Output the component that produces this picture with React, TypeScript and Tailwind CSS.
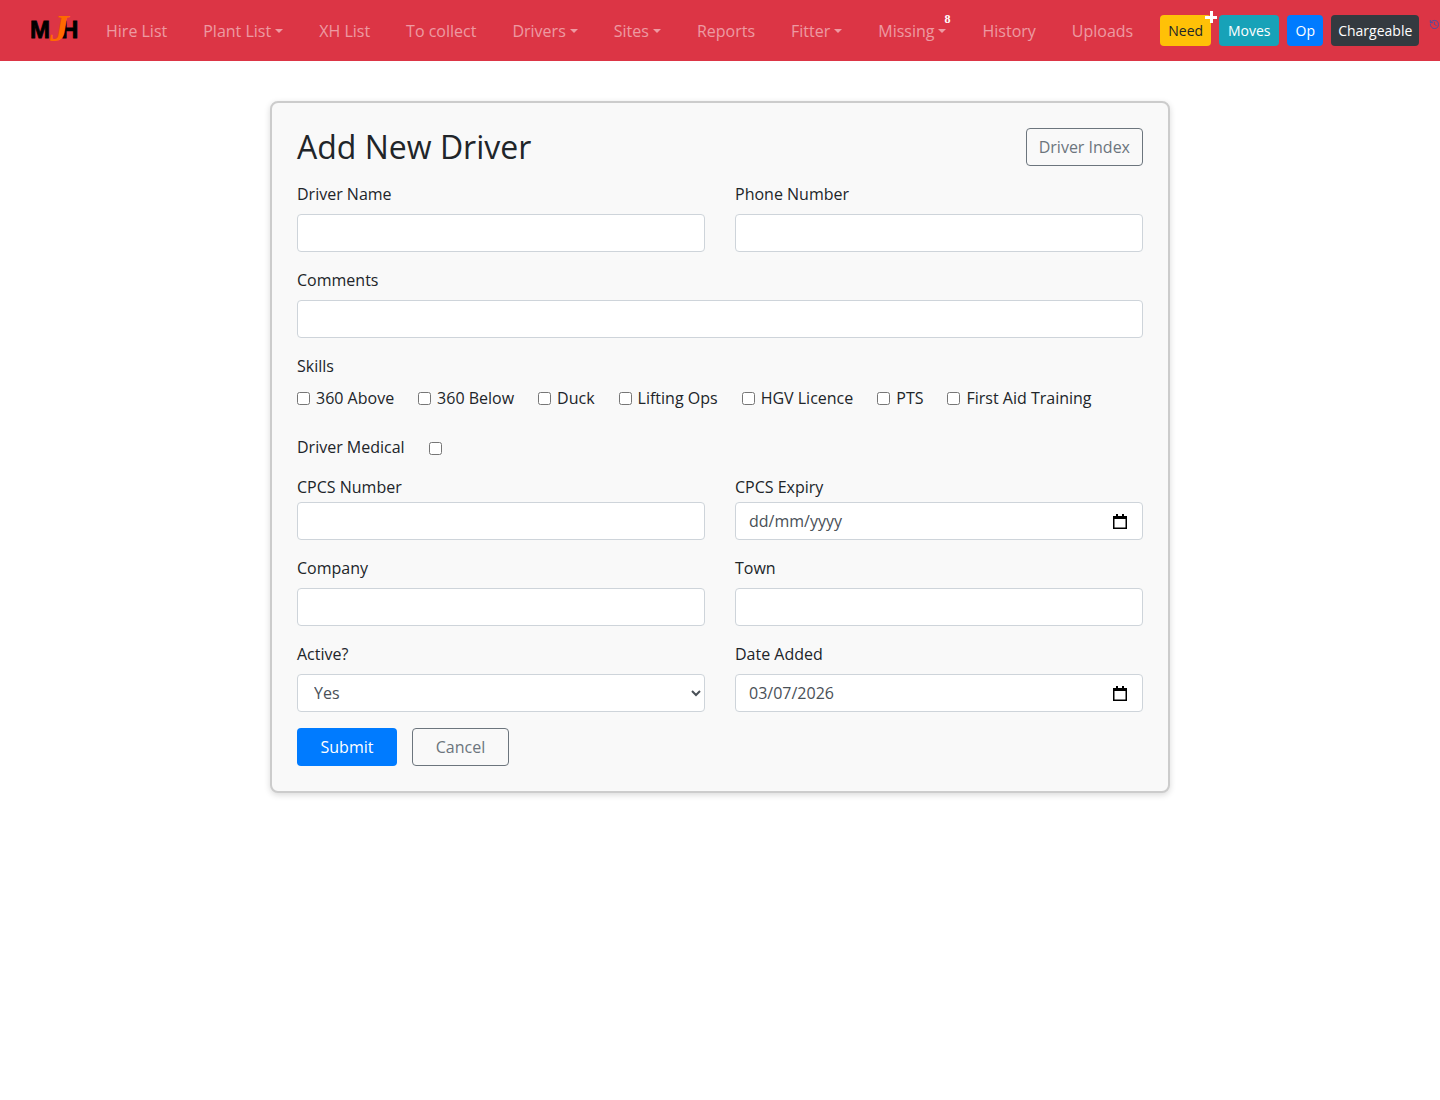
import { History } from "lucide-react";

const font = "font-['Open_Sans','Noto_Sans',sans-serif]";

function Caret() {
  return <span className="ml-[4px] inline-block border-x-[4px] border-t-[4px] border-x-transparent border-t-current align-middle" />;
}

function NavItem({ label, caret }: { label: string; caret?: boolean }) {
  return (
    <a className="flex items-center whitespace-nowrap text-white/50">
      {label}
      {caret && <Caret />}
    </a>
  );
}

function Field({ label, children }: { label: string; children: React.ReactNode }) {
  return (
    <div className="min-w-0 flex-1">
      <label className="mb-2 block h-6 leading-6">{label}</label>
      {children}
    </div>
  );
}

function TextInput() {
  return <input type="text" className="block h-[38px] w-full rounded border border-[#ced4da] bg-white px-3 text-[#495057]" />;
}

function DateInput({ value }: { value: string }) {
  return (
    <div className="flex h-[38px] w-full items-center justify-between rounded border border-[#ced4da] bg-white pl-[13px] pr-[15px] text-[#495057]">
      <span>{value}</span>
      <svg width="14" height="15" viewBox="0 0 14 15" className="text-black">
        <path d="M3 0h2v2h4V0h2v2h3v13H0V2h3z M1.5 5v8.5h11V5z" fill="currentColor" fillRule="evenodd" />
      </svg>
    </div>
  );
}

function Check({ label }: { label: string }) {
  return (
    <label className="flex items-center whitespace-nowrap">
      <input type="checkbox" className="mr-[6px] h-[13px] w-[13px]" />
      {label}
    </label>
  );
}

export default function App() {
  return (
    <div className={`${font} min-h-[1100px] bg-white text-[16px] text-[#212529]`}>
      {/* NAVBAR */}
      <nav className="flex h-[61px] items-center bg-[#dc3545] pl-[31px]">
        <svg width="52" height="36" viewBox="0 0 52 36" className="mr-[23px] shrink-0">
          <text x="-1" y="25" fontFamily="Liberation Sans" fontWeight="700" fontSize="24" stroke="#000" strokeWidth="0.8">M</text>
          <text x="30" y="25" fontFamily="Liberation Sans" fontWeight="700" fontSize="24" stroke="#000" strokeWidth="0.8">H</text>
          <text x="19" y="28" fontFamily="Liberation Serif" fontWeight="700" fontStyle="italic" fontSize="38" fill="#ff6a00">J</text>
        </svg>

        <div className="flex gap-[36px]">
          <NavItem label="Hire List" />
          <NavItem label="Plant List" caret />
          <NavItem label="XH List" />
          <NavItem label="To collect" />
          <NavItem label="Drivers" caret />
          <NavItem label="Sites" caret />
          <NavItem label="Reports" />
          <NavItem label="Fitter" caret />
          <div className="relative">
            <NavItem label="Missing" caret />
            <span className="absolute right-[-4px] top-[-6px] font-['Liberation_Serif',serif] text-[12px] font-bold leading-none text-white">8</span>
          </div>
          <NavItem label="History" />
          <NavItem label="Uploads" />
        </div>

        <div className="ml-[27px] flex items-center gap-2 text-[14px]">
          <a className="relative flex h-[31px] w-[51px] items-center justify-center rounded bg-[#ffc107]">
            Need
            <span className="absolute right-[-6px] top-[-4px] h-[12px] w-[12px]">
              <span className="absolute left-[5px] top-0 h-[12px] w-[3px] bg-white" />
              <span className="absolute left-0 top-[5px] h-[3px] w-[12px] bg-white" />
            </span>
          </a>
          <a className="flex h-[31px] w-[60px] items-center justify-center rounded bg-[#17a2b8] text-white">Moves</a>
          <a className="flex h-[31px] w-[36px] items-center justify-center rounded bg-[#007bff] text-white">Op</a>
          <a className="flex h-[31px] w-[88px] items-center justify-center rounded bg-[#343a40] text-white">Chargeable</a>
        </div>
        <History className="mb-[12px] ml-[10px] h-[15px] w-[15px] text-[#3f51a5]" />
      </nav>

      {/* CARD */}
      <div className="mx-auto mt-10 w-[900px] rounded-lg border-2 border-[#ccc] bg-[#f9f9f9] p-[25px] shadow-[0_2px_6px_rgba(0,0,0,0.15)]">
        <div className="mb-4 flex h-[38px] items-center justify-between">
          <h1 className="text-[32px] font-medium leading-[38px]">Add New Driver</h1>
          <a className="flex h-[38px] items-center rounded border border-[#6c757d] px-3 text-[#6c757d]">Driver Index</a>
        </div>

        <div className="mb-4 flex gap-[30px]">
          <Field label="Driver Name"><TextInput /></Field>
          <Field label="Phone Number"><TextInput /></Field>
        </div>

        <div className="mb-4">
          <Field label="Comments"><TextInput /></Field>
        </div>

        <div className="mb-2 h-6 leading-6">Skills</div>
        <div className="mb-[25px] flex h-6 gap-[24px]">
          <Check label="360 Above" />
          <Check label="360 Below" />
          <Check label="Duck" />
          <Check label="Lifting Ops" />
          <Check label="HGV Licence" />
          <Check label="PTS" />
          <Check label="First Aid Training" />
        </div>

        <div className="mb-4 flex h-6 items-center">
          <span>Driver Medical</span>
          <input type="checkbox" className="ml-6 mt-[3px] h-[13px] w-[13px]" />
        </div>

        <div className="mb-4 flex gap-[30px]">
          <div className="min-w-0 flex-1">
            <label className="mb-[3px] block h-6 leading-6">CPCS Number</label>
            <TextInput />
          </div>
          <div className="min-w-0 flex-1">
            <label className="mb-[3px] block h-6 leading-6">CPCS Expiry</label>
            <DateInput value="dd/mm/yyyy" />
          </div>
        </div>

        <div className="mb-4 flex gap-[30px]">
          <Field label="Company"><TextInput /></Field>
          <Field label="Town"><TextInput /></Field>
        </div>

        <div className="mb-4 flex gap-[30px]">
          <Field label="Active?">
            <select className="block h-[38px] w-full rounded border border-[#ced4da] bg-white px-3 text-[#495057]">
              <option>Yes</option>
              <option>No</option>
            </select>
          </Field>
          <Field label="Date Added"><DateInput value="03/07/2026" /></Field>
        </div>

        <div className="flex gap-[15px]">
          <button className="h-[38px] w-[100px] rounded bg-[#007bff] text-white">Submit</button>
          <button className="h-[38px] w-[97px] rounded border border-[#6c757d] text-[#6c757d]">Cancel</button>
        </div>
      </div>
    </div>
  );
}
